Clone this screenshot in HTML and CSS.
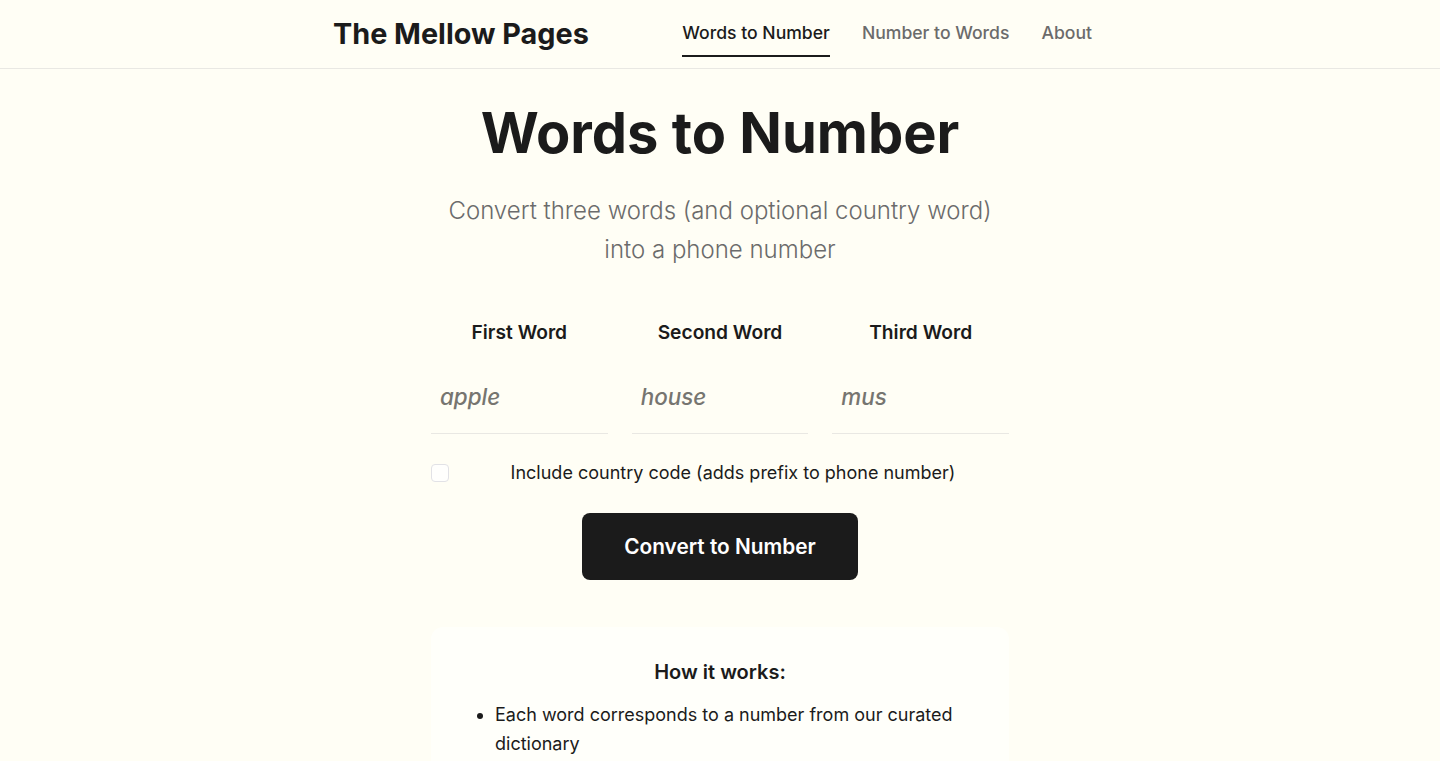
FILE: index.html
```html
<!DOCTYPE html>
<html lang="en">
<head>
<meta charset="utf-8">
<title>The Mellow Pages</title>
<link rel="stylesheet" href="styles.css">
</head>
<body>
<header class="site-header">
  <div class="header-inner">
    <a class="logo" href="#">The Mellow Pages</a>
    <nav class="nav">
      <a class="nav-link active" href="#">Words to Number</a>
      <a class="nav-link" href="#">Number to Words</a>
      <a class="nav-link" href="#">About</a>
    </nav>
  </div>
</header>
<main class="main">
  <h1 class="title">Words to Number</h1>
  <p class="subtitle">Convert three words (and optional country word)<br>into a phone number</p>
  <form class="form">
    <div class="fields">
      <label class="field">
        <span class="field-label">First Word</span>
        <input class="field-input" type="text" placeholder="apple">
      </label>
      <label class="field">
        <span class="field-label">Second Word</span>
        <input class="field-input" type="text" placeholder="house">
      </label>
      <label class="field">
        <span class="field-label">Third Word</span>
        <input class="field-input" type="text" placeholder="mus">
      </label>
    </div>
    <label class="check-row">
      <input class="check" type="checkbox">
      <span class="check-text">Include country code (adds prefix to phone number)</span>
    </label>
    <div class="actions">
      <button class="btn" type="button">Convert to Number</button>
    </div>
  </form>
  <section class="info">
    <h2 class="info-title">How it works:</h2>
    <ul class="info-list">
      <li>Each word corresponds to a number from our curated dictionary</li>
      <li>The numbers are combined to form your phone number</li>
    </ul>
  </section>
</main>
</body>
</html>
```
FILE: styles.css
```css
* { box-sizing: border-box; }
html, body { margin: 0; padding: 0; }
body {
  background: #fffef5;
  color: #1b1b1b;
  font-family: Inter, "Noto Sans", sans-serif;
}
.site-header {
  border-bottom: 1px solid #e9e8e3;
}
.header-inner {
  width: 774px;
  margin: 0 auto;
  padding-right: 15px;
  padding-bottom: 2px;
  height: 68px;
  display: flex;
  align-items: center;
  justify-content: space-between;
}
.logo {
  font-size: 28.8px;
  font-weight: 700;
  color: #1b1b1b;
  text-decoration: none;
}
.nav {
  display: flex;
  gap: 32px;
  height: 100%;
}
.nav-link {
  font-size: 17.6px;
  font-weight: 500;
  color: #6b6b6b;
  text-decoration: none;
  display: flex;
  align-items: center;
  height: 100%;
  padding-bottom: 2px;
  position: relative;
}
.nav-link.active { color: #1b1b1b; }
.nav-link.active::after {
  content: "";
  position: absolute;
  left: 0;
  right: 0;
  bottom: 9px;
  height: 2px;
  background: #1b1b1b;
}
.main {
  width: 578px;
  margin: 0 auto;
  padding-top: 31px;
}
.title {
  margin: 0;
  text-align: center;
  font-size: 56px;
  line-height: 67px;
  font-weight: 700;
}
.subtitle {
  margin: 25px 0 0;
  text-align: center;
  font-size: 24px;
  font-weight: 300;
  line-height: 38.5px;
  color: #6b6b6b;
}
.form { margin-top: 51px; }
.fields {
  display: grid;
  grid-template-columns: repeat(3, minmax(0, 1fr));
  gap: 24px;
}
.field {
  display: flex;
  flex-direction: column;
  min-width: 0;
}
.field-label {
  text-align: center;
  font-size: 19.2px;
  font-weight: 600;
  line-height: 24px;
}
.field-input {
  width: 100%;
  min-width: 0;
  margin-top: 24px;
  height: 66px;
  border: 0;
  border-bottom: 1px solid #e9e8e3;
  background: transparent;
  font-family: inherit;
  font-size: 22.4px;
  font-weight: 500;
  font-style: italic;
  padding: 0 9px 8px;
  color: #1b1b1b;
  outline: none;
}
.field-input::placeholder { color: #767570; font-style: italic; }
.check-row {
  display: flex;
  align-items: center;
  gap: 8px;
  margin-top: 27px;
}
.check {
  appearance: none;
  -webkit-appearance: none;
  width: 18px;
  height: 18px;
  margin: 0;
  border: 1px solid #e2e2e6;
  border-radius: 4px;
  background: #fffffd;
  flex: none;
}
.check-text {
  flex: 1;
  text-align: center;
  font-size: 18px;
  line-height: 24px;
}
.actions {
  display: flex;
  justify-content: center;
  margin-top: 28px;
}
.btn {
  width: 276px;
  height: 67px;
  border: 0;
  border-radius: 8px;
  background: #1b1b1b;
  color: #ffffff;
  font-family: inherit;
  font-size: 20.8px;
  font-weight: 600;
  cursor: pointer;
}
.info {
  margin-top: 47px;
  background: #fffffa;
  border-radius: 12px;
  padding: 32px 48px 24px;
}
.info-title {
  margin: 0;
  text-align: center;
  font-size: 20px;
  font-weight: 600;
  line-height: 26px;
}
.info-list {
  margin: 16px 0 0;
  padding-left: 16px;
  font-size: 18px;
  line-height: 28.8px;
}
```
